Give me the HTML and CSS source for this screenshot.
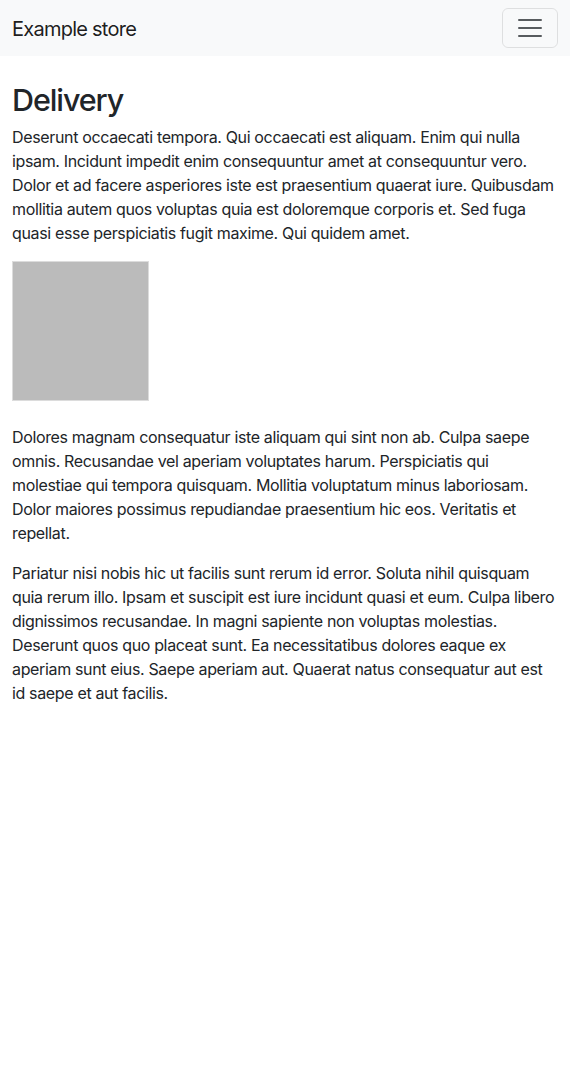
FILE: index.html
```html
<!DOCTYPE html>
<html lang="en">
<head>
<meta charset="utf-8">
<title>Delivery</title>
<link rel="stylesheet" href="styles.css">
</head>
<body>
<nav class="navbar">
  <a class="brand" href="#">Example store</a>
  <button class="toggler" type="button" aria-label="Toggle navigation">
    <svg class="toggler-icon" viewBox="0 0 30 30" width="30" height="30"><path stroke="rgba(33,37,41,0.75)" stroke-linecap="round" stroke-miterlimit="10" stroke-width="2" d="M4 7h22M4 15h22M4 23h22"/></svg>
  </button>
</nav>
<main class="content">
  <h1 class="title">Delivery</h1>
  <p class="para">Deserunt occaecati tempora. Qui occaecati est aliquam. Enim qui nulla ipsam. Incidunt impedit enim consequuntur amet at consequuntur vero. Dolor et ad facere asperiores iste est praesentium quaerat iure. Quibusdam mollitia autem quos voluptas quia est doloremque corporis et. Sed fuga quasi esse perspiciatis fugit maxime. Qui quidem amet.</p>
  <div class="placeholder"></div>
  <p class="para">Dolores magnam consequatur iste aliquam qui sint non ab. Culpa saepe omnis. Recusandae vel aperiam voluptates harum. Perspiciatis qui molestiae qui tempora quisquam. Mollitia voluptatum minus laboriosam. Dolor maiores possimus repudiandae praesentium hic eos. Veritatis et repellat.</p>
  <p class="para">Pariatur nisi nobis hic ut facilis sunt rerum id error. Soluta nihil quisquam quia rerum illo. Ipsam et suscipit est iure incidunt quasi et eum. Culpa libero dignissimos recusandae. In magni sapiente non voluptas molestias. Deserunt quos quo placeat sunt. Ea necessitatibus dolores eaque ex aperiam sunt eius. Saepe aperiam aut. Quaerat natus consequatur aut est id saepe et aut facilis.</p>
</main>
</body>
</html>
```

FILE: styles.css
```css
* { box-sizing: border-box; }
body {
  margin: 0;
  font-family: Inter, "Noto Sans", "Liberation Sans", sans-serif;
  font-size: 16px;
  line-height: 1.5;
  letter-spacing: -0.35px;
  color: #212529;
  background: #fff;
}
.navbar {
  background: #f8f9fa;
  height: 56px;
  padding: 8px 12px;
  display: flex;
  align-items: center;
  justify-content: space-between;
}
.brand {
  font-size: 20px;
  line-height: 30px;
  letter-spacing: -0.75px;
  color: rgba(0,0,0,0.9);
  text-decoration: none;
  padding-top: 2px;
}
.toggler {
  width: 56px;
  height: 40px;
  padding: 4px 12px;
  border: 1px solid rgba(0,0,0,0.1);
  border-radius: 6px;
  background: transparent;
  display: flex;
  align-items: center;
  justify-content: center;
}
.toggler-icon { display: block; }
.content {
  padding: 24px 12px 0;
}
.title {
  font-size: 30.5px;
  font-weight: 500;
  line-height: 1.2;
  letter-spacing: -1.1px;
  margin: 0 0 8px;
  padding-top: 2px;
  margin-bottom: 6px;
}
.para {
  margin: 0 0 16px;
}
.placeholder {
  width: 137px;
  height: 140px;
  background: #bbbbbb;
  border: 1px solid #dcdcdc;
  margin-bottom: 24px;
}
```
